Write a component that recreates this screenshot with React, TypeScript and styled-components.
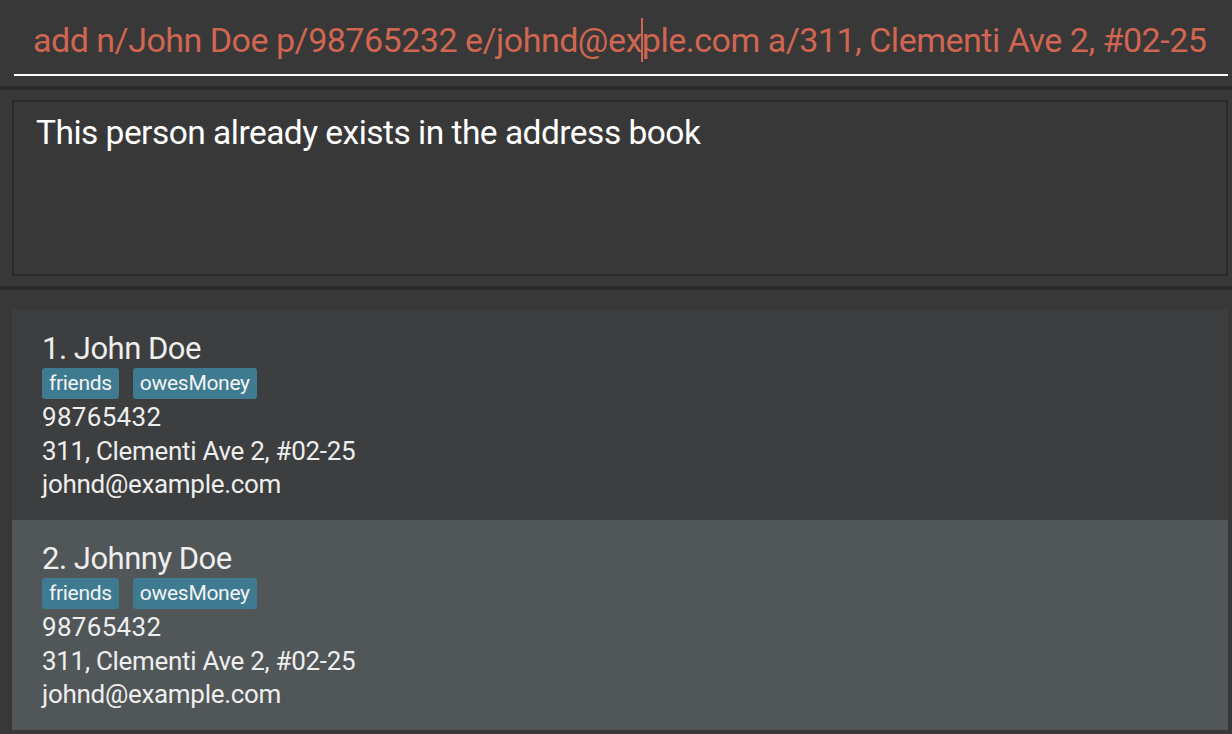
import React from "react";
import styled, { createGlobalStyle } from "styled-components";

const GlobalStyle = createGlobalStyle`
  html, body {
    margin: 0;
    padding: 0;
    background: #383838;
  }
  body {
    font-family: Roboto, "Noto Sans", "Liberation Sans", sans-serif;
  }
  * { box-sizing: border-box; }
`;

const Window = styled.div`
  width: 1232px;
  height: 734px;
  display: flex;
  flex-direction: column;
  background: #383838;
  overflow: hidden;
`;

const CommandArea = styled.div`
  height: 86px;
  padding: 10px 4px 10px 14px;
  display: flex;
  flex-direction: column;
  justify-content: flex-end;
`;

const CommandInput = styled.div`
  height: 66px;
  border-bottom: 2px solid #ffffff;
  padding: 0 0 4px 19px;
  display: flex;
  align-items: center;
  font-size: 34px;
  letter-spacing: -0.49px;
  color: #d06651;
  white-space: nowrap;
  overflow: hidden;
`;

const Caret = styled.span`
  display: inline-block;
  flex: none;
  width: 2px;
  height: 44px;
  margin: 0 -1px;
  background: #d06651;
`;

const Divider = styled.div`
  height: 4px;
  flex: none;
  background: #2b2b2b;
`;

const ResultArea = styled.div`
  height: 196px;
  padding: 10px 4px 10px 12px;
  display: flex;
`;

const ResultBox = styled.div`
  flex: 1;
  border: 2px solid #2b2b2b;
  padding: 10px 22px;
  color: #ffffff;
  font-size: 33.5px;
  letter-spacing: -0.52px;
  line-height: 42px;
`;

const ListArea = styled.div`
  flex: 1;
  padding: 20px 4px 0 12px;
  display: flex;
  flex-direction: column;
`;

const Card = styled.div<{ $odd: boolean }>`
  height: 210px;
  flex: none;
  background: ${(p) => (p.$odd ? "#515658" : "#3c3e3f")};
  padding: 20px 30px 0 30px;
  color: #eeeeee;
  display: flex;
  flex-direction: column;
`;

const Name = styled.div`
  font-size: 31px;
  letter-spacing: -0.5px;
  line-height: 38px;
`;

const TagRow = styled.div`
  display: flex;
  gap: 14px;
`;

const Tag = styled.span`
  background: #3e7b91;
  color: #f4f4f4;
  font-size: 21px;
  letter-spacing: -0.3px;
  line-height: 31px;
  padding: 0 7px;
  border-radius: 3px;
`;

const Field = styled.div`
  font-size: 26px;
  letter-spacing: -0.3px;
  line-height: 33.5px;
`;

const Phone = styled(Field)`
  margin-top: 2px;
  letter-spacing: 0.3px;
`;

const persons = [
  { name: "John Doe", tags: ["friends", "owesMoney"], phone: "98765432", address: "311, Clementi Ave 2, #02-25", email: "johnd@example.com" },
  { name: "Johnny Doe", tags: ["friends", "owesMoney"], phone: "98765432", address: "311, Clementi Ave 2, #02-25", email: "johnd@example.com" },
];

export default function App() {
  return (
    <>
      <GlobalStyle />
      <Window>
        <CommandArea>
          <CommandInput>
            <span>add n/John Doe p/98765232 e/johnd@ex</span>
            <Caret />
            <span>ple.com a/311, Clementi Ave 2, #02-25</span>
          </CommandInput>
        </CommandArea>
        <Divider />
        <ResultArea>
          <ResultBox>This person already exists in the address book</ResultBox>
        </ResultArea>
        <Divider />
        <ListArea>
          {persons.map((p, i) => (
            <Card key={i} $odd={i % 2 === 1}>
              <Name>{i + 1}. {p.name}</Name>
              <TagRow>
                {p.tags.map((t) => (
                  <Tag key={t}>{t}</Tag>
                ))}
              </TagRow>
              <Phone>{p.phone}</Phone>
              <Field>{p.address}</Field>
              <Field>{p.email}</Field>
            </Card>
          ))}
        </ListArea>
      </Window>
    </>
  );
}
